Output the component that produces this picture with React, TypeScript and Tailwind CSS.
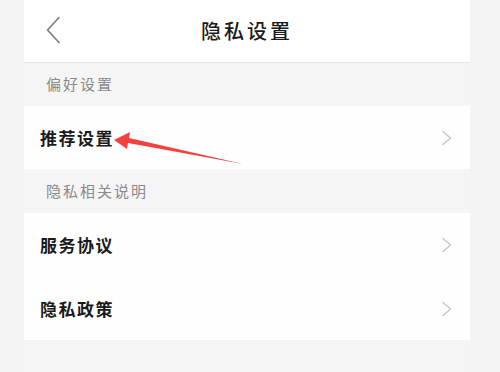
const font = { fontFamily: '"Noto Sans CJK SC", "Noto Sans", sans-serif' };

const Chevron = () => (
  <svg width="12" height="16" viewBox="0 0 12 16" fill="none" className="shrink-0">
    <path d="M2 1.5 L9.5 8 L2 14.5" stroke="#c6c6c6" strokeWidth="1.4" strokeLinecap="round" strokeLinejoin="round" />
  </svg>
);

const Row = ({ label, h = "h-[64px]" }: { label: string; h?: string }) => (
  <div className={`${h} flex items-center justify-between pl-[16px] pr-[17px] bg-[#fefefe]`}>
    <span className="text-[17px] font-bold tracking-[1.5px] text-[#1a1a1a]">{label}</span>
    <Chevron />
  </div>
);

const SectionLabel = ({ label, h }: { label: string; h: string }) => (
  <div className={`${h} flex items-center pl-[22px] bg-[#f5f5f5]`}>
    <span className="text-[15px] tracking-[2px] text-[#8a8a8a]">{label}</span>
  </div>
);

export default function App() {
  return (
    <div className="w-[500px] h-[372px] bg-[#f4f4f4] flex overflow-hidden" style={font}>
      <div className="relative ml-[24px] w-[446px] flex flex-col">
        {/* Header */}
        <div className="h-[63px] bg-white border-b border-[#e8e8e8] flex items-center relative">
          <svg width="18" height="28" viewBox="0 0 18 28" className="absolute left-[21px] top-[16px]">
            <path d="M14 1.5 L2.5 14 L14 26.5" stroke="#7a7a7a" strokeWidth="1.6" fill="none" strokeLinecap="round" strokeLinejoin="round" />
          </svg>
          <h1 className="w-full text-center text-[20px] tracking-[3px] text-[#1a1a1a] font-medium">隐私设置</h1>
        </div>

        <SectionLabel label="偏好设置" h="h-[43px]" />
        <Row label="推荐设置" h="h-[63px]" />
        <SectionLabel label="隐私相关说明" h="h-[44px]" />
        <Row label="服务协议" />
        <Row label="隐私政策" h="h-[63px]" />
        <div className="flex-1 bg-[#f5f5f5]" />

        {/* red annotation arrow */}
        <svg width="446" height="372" className="absolute left-0 top-0 pointer-events-none" viewBox="0 0 446 372">
          <polygon points="90,140 106,132 105,138 219,164 104,143 103,149" fill="#f2413f" />
        </svg>
      </div>
    </div>
  );
}
